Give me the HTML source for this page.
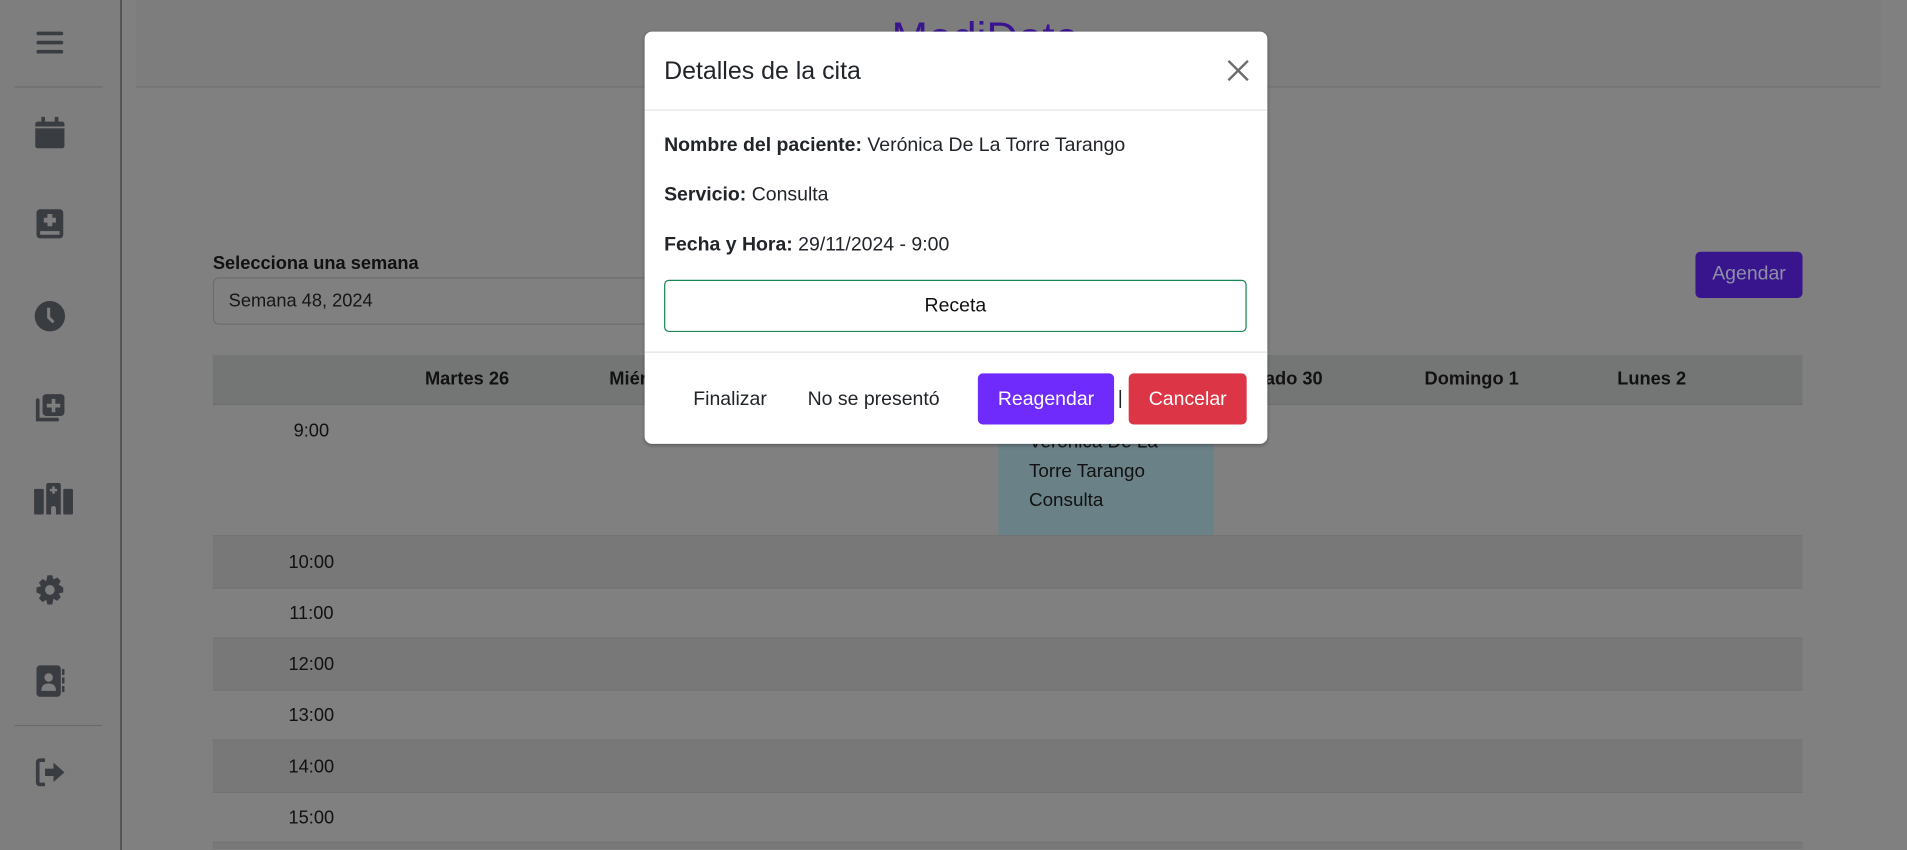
<!DOCTYPE html>
<html><head><meta charset="utf-8"><style>
html,body{margin:0;padding:0;width:1907px;height:850px;overflow:hidden;background:#808080;}
#c{position:relative;width:1907px;height:850px;overflow:hidden;}
#w{position:absolute;left:0;top:0;width:1568px;height:699px;overflow:hidden;transform:scale(1.21626);transform-origin:0 0;font-family:"Liberation Sans",sans-serif;color:#111;}
.a{position:absolute}
.ic{position:absolute;left:28px;width:26px;height:26px}
.t{position:absolute;font-size:15px}
.row{position:absolute;left:175px;width:1307px;height:42px}
.st{background:#777877;border-top:1px solid #727473;border-bottom:1px solid #727473}
.tm{position:absolute;width:60px;left:226px;text-align:center;font-size:15px}
.hd{position:absolute;top:303px;font-weight:bold;font-size:15px;text-align:center;width:160px}
</style></head><body><div id="c"><div id="w">
<div class="a" style="left:0;top:0;width:99px;height:699px;background:#7e7e7e;border-right:1px solid #3a3a3a"></div>
<div class="a" style="left:12px;top:71px;width:72px;height:1px;background:#6b6b6b"></div>
<div class="a" style="left:12px;top:596px;width:72px;height:1px;background:#6b6b6b"></div>
<svg class="ic" style="top:22px" viewBox="0 0 26 26"><rect x="2" y="4" width="22" height="3" rx="1.5" fill="#393c40"/><rect x="2" y="11.5" width="22" height="3" rx="1.5" fill="#393c40"/><rect x="2" y="19" width="22" height="3" rx="1.5" fill="#393c40"/></svg>
<svg class="ic" style="top:96px" viewBox="0 0 26 26"><rect x="1" y="4" width="24" height="22" rx="2" fill="#393c40"/><rect x="6" y="0" width="3" height="6" fill="#393c40"/><rect x="17" y="0" width="3" height="6" fill="#393c40"/><rect x="1" y="8" width="24" height="1.5" fill="#7e7e7e"/></svg>
<svg class="ic" style="top:171px" viewBox="0 0 26 26"><rect x="2" y="1" width="22" height="24" rx="3" fill="#393c40"/><rect x="5" y="19" width="16" height="3" fill="#7e7e7e"/><path d="M11 5h4v3h3v4h-3v3h-4v-3H8V8h3z" fill="#7e7e7e"/></svg>
<svg class="ic" style="top:247px" viewBox="0 0 26 26"><circle cx="13" cy="13" r="12.5" fill="#393c40"/><path d="M12 6v8l4 4" stroke="#7e7e7e" stroke-width="2.5" fill="none"/></svg>
<svg class="ic" style="top:322px" viewBox="0 0 26 26"><path d="M3 7v16h16" stroke="#393c40" stroke-width="3" fill="none" stroke-linecap="round"/><rect x="7" y="2" width="18" height="18" rx="3" fill="#393c40"/><path d="M14.5 6h3v4h4v3h-4v4h-3v-4h-4v-3h4z" fill="#7e7e7e"/></svg>
<svg class="ic" style="top:397px;width:32px;left:28px" viewBox="0 0 32 26"><rect x="0" y="5" width="8" height="21" rx="1" fill="#393c40"/><rect x="24" y="5" width="8" height="21" rx="1" fill="#393c40"/><path d="M10 2q0-2 2-2h8q2 0 2 2v24h-4v-5q0-2-2-2t-2 2v5h-4z" fill="#393c40"/><path d="M15 3h2v2h2v2h-2v2h-2V7h-2V5h2z" fill="#7e7e7e"/></svg>
<svg class="ic" style="top:472px" viewBox="0 0 26 26"><path d="M11 1h4l1 3.5 3-1.8 3 3-1.8 3L24 11v4l-3.8 1 1.8 3-3 3-3-1.8L15 25h-4l-1-3.8-3 1.8-3-3 1.8-3L2 15v-4l3.8-1L4 7l3-3 3 1.8z" fill="#393c40"/><circle cx="13" cy="13" r="4" fill="#7e7e7e"/></svg>
<svg class="ic" style="top:547px" viewBox="0 0 26 26"><rect x="2" y="0" width="20" height="26" rx="3" fill="#393c40"/><rect x="23" y="3" width="2" height="5" fill="#393c40"/><rect x="23" y="10" width="2" height="5" fill="#393c40"/><rect x="23" y="17" width="2" height="5" fill="#393c40"/><circle cx="12" cy="10" r="3.5" fill="#7e7e7e"/><path d="M6 21q0-6 6-6t6 6z" fill="#7e7e7e"/></svg>
<svg class="ic" style="top:622px" viewBox="0 0 26 26"><path d="M9 3H5q-2 0-2 2v16q0 2 2 2h4" stroke="#393c40" stroke-width="3" fill="none"/><path d="M9 10h7V5l9 8-9 8v-5H9z" fill="#393c40"/></svg>
<div class="a" style="left:112px;top:0;width:1434px;height:71px;background:#7d7d7d;border-bottom:1px solid #717171"></div>
<div class="a" style="left:640px;top:10px;width:340px;text-align:center;font-size:36px;color:#3a1390">MediDate</div>
<div class="t" style="left:175px;top:208px;font-weight:bold">Selecciona una semana</div>
<div class="a" style="left:175px;top:228px;width:380px;height:37px;border:1px solid #6e6e6e;border-radius:5px;background:#808080"></div>
<div class="t" style="left:188px;top:239px;color:#161616">Semana 48, 2024</div>
<div class="a" style="left:1394px;top:207px;width:88px;height:38px;background:#38158c;border-radius:4px;color:#8f8fa8;font-size:16px;text-align:center;line-height:38px">Agendar</div>
<div class="row" style="top:292px;height:40px;background:#747675;border-bottom:1px solid #6e6e6e"></div>
<div class="hd" style="left:304px">Martes 26</div>
<div class="hd" style="left:466px">Miércoles 27</div>
<div class="hd" style="left:628px">Jueves 28</div>
<div class="hd" style="left:790px">Viernes 29</div>
<div class="hd" style="left:970px">Sábado 30</div>
<div class="hd" style="left:1130px">Domingo 1</div>
<div class="hd" style="left:1278px">Lunes 2</div>
<div class="a" style="left:821px;top:333px;width:177px;height:107px;background:#6b8188"></div>
<div class="a" style="left:846px;top:352px;font-size:15.5px;line-height:24px">Verónica De La<br>Torre Tarango<br>Consulta</div>
<div class="tm" style="top:346px">9:00</div>
<div class="row st" style="top:440px"></div><div class="tm" style="top:454px">10:00</div>
<div class="tm" style="top:496px">11:00</div>
<div class="row st" style="top:524px"></div><div class="tm" style="top:538px">12:00</div>
<div class="tm" style="top:580px">13:00</div>
<div class="row st" style="top:608px"></div><div class="tm" style="top:622px">14:00</div>
<div class="tm" style="top:664px">15:00</div>
<div class="row st" style="top:692px;height:5px;border-bottom:none"></div>
<div class="a" style="left:530px;top:26px;width:512px;height:339px;background:#fff;border-radius:6px;box-shadow:0 1px 3px rgba(0,0,0,.3)">
 <div class="a" style="left:16px;top:21px;font-size:20.5px;color:#212529">Detalles de la cita</div>
 <svg class="a" style="left:479px;top:23px" width="18" height="18" viewBox="0 0 18 18"><path d="M1 1l16 16M17 1L1 17" stroke="#6c6c6c" stroke-width="2"/></svg>
 <div class="a" style="left:0;top:64px;width:512px;height:1px;background:#dee2e6"></div>
 <div class="a" style="left:16px;top:85px;font-size:16px;color:#212529"><b>Nombre del paciente:</b> Verónica De La Torre Tarango</div>
 <div class="a" style="left:16px;top:126px;font-size:16px;color:#212529"><b>Servicio:</b> Consulta</div>
 <div class="a" style="left:16px;top:167px;font-size:16px;color:#212529"><b>Fecha y Hora:</b> 29/11/2024 - 9:00</div>
 <div class="a" style="left:16px;top:204px;width:477px;height:41px;border:1px solid #198754;border-radius:4px;text-align:center;line-height:42px;font-size:16px;color:#111">Receta</div>
 <div class="a" style="left:0;top:263px;width:512px;height:1px;background:#dee2e6"></div>
 <div class="a" style="left:40px;top:294px;font-size:16px;color:#212529">Finalizar</div>
 <div class="a" style="left:134px;top:294px;font-size:16px;color:#212529">No se presentó</div>
 <div class="a" style="left:274px;top:281px;width:112px;height:42px;background:#6f2bfb;border-radius:4px;color:#fff;text-align:center;line-height:43px;font-size:16px">Reagendar</div>
 <div class="a" style="left:389px;top:293px;font-size:16px;color:#212529">|</div>
 <div class="a" style="left:398px;top:281px;width:97px;height:42px;background:#dc3545;border-radius:4px;color:#fff;text-align:center;line-height:43px;font-size:16px">Cancelar</div>
</div>
</div></div></body></html>
